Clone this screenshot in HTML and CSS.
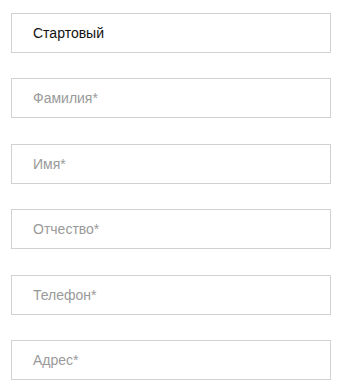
FILE: index.html
```html
<!DOCTYPE html>
<html lang="ru">
<head>
<meta charset="UTF-8">
<title>Форма</title>
<link rel="stylesheet" href="styles.css">
</head>
<body>
<form class="form-ctnr">
<input class="form-field" type="text" value="Стартовый">
<input class="form-field" type="text" placeholder="Фамилия*">
<input class="form-field" type="text" placeholder="Имя*">
<input class="form-field" type="text" placeholder="Отчество*">
<input class="form-field" type="text" placeholder="Телефон*">
<input class="form-field" type="text" placeholder="Адрес*">
</form>
</body>
</html>
```

FILE: styles.css
```css
html,body{
margin:0px;
padding:0px;
background:#fff;
}
*{font-family: 'Liberation Sans', Arial, sans-serif;}
.form-ctnr{
display:flex;
flex-direction:column;
gap:25.4px;
padding:13px 0px 0px 11px;
margin:0px;
}
.form-field{
width:320px;
height:40px;
box-sizing:border-box;
border:1px solid #d2d0d0;
border-radius:0px;
padding:0px 0px 0px 21px;
margin:0px;
font-size:14px;
color:#111;
background:#fff;
outline:none;
}
.form-field::placeholder{
color:#9a9a9a;
opacity:1;
}
```
